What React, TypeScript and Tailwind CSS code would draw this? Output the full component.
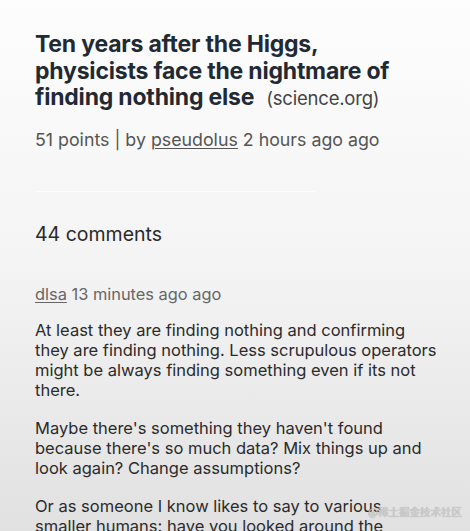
import React from "react";

export default function App() {
  const font = { fontFamily: "Inter, 'Noto Sans', sans-serif" };
  return (
    <div
      className="relative h-[531px] w-[470px] overflow-hidden bg-linear-to-b from-[#fdfdfd] via-[#f4f4f4] to-[#e1e1e1]"
      style={font}
    >
      <div className="w-[470px] px-[35px] pt-[31px]">
        <h1 className="text-[23px] font-bold leading-[26.5px] text-[#1f2a35] tracking-[-0.2px]">
          Ten years after the Higgs, physicists face the nightmare of finding nothing else
          <span className="ml-[12px] text-[18.5px] font-normal text-[#444]">(science.org)</span>
        </h1>
        <div className="mt-[17px] text-[17.8px] leading-[22px] text-[#555]">
          51 points | by <span className="underline decoration-1 underline-offset-2">pseudolus</span> 2 hours ago ago
        </div>
        <div className="mt-[40px] h-px w-[280px] bg-white/70" />
        <div className="mt-[29px] text-[19.5px] leading-[26px] text-[#2a2a2a]">44 comments</div>
        <div className="mt-[37px] text-[16.4px] leading-[20px] text-[#666]">
          <span className="underline decoration-1 underline-offset-2">dlsa</span> 13 minutes ago ago
        </div>
        <div className="mt-[16px] w-[402px] text-[16.5px] leading-[20px] text-[#2b2b2b]">
          <p className="mb-[18px]">
            At least they are finding nothing and confirming they are finding nothing. Less scrupulous operators might be always finding something even if its not there.
          </p>
          <p className="mb-[18px]">
            Maybe there's something they haven't found because there's so much data? Mix things up and look again? Change assumptions?
          </p>
          <p>
            Or as someone I know likes to say to various smaller humans: have you looked around the
          </p>
        </div>
      </div>
      <div
        className="absolute left-[368px] top-[505px] whitespace-nowrap text-[10.5px] leading-[13px] text-[#cfcfcf]"
        style={{ fontFamily: "'Noto Sans CJK SC', sans-serif", textShadow: "0 0 1px #999" }}
      >
        @稀土掘金技术社区
      </div>
    </div>
  );
}
